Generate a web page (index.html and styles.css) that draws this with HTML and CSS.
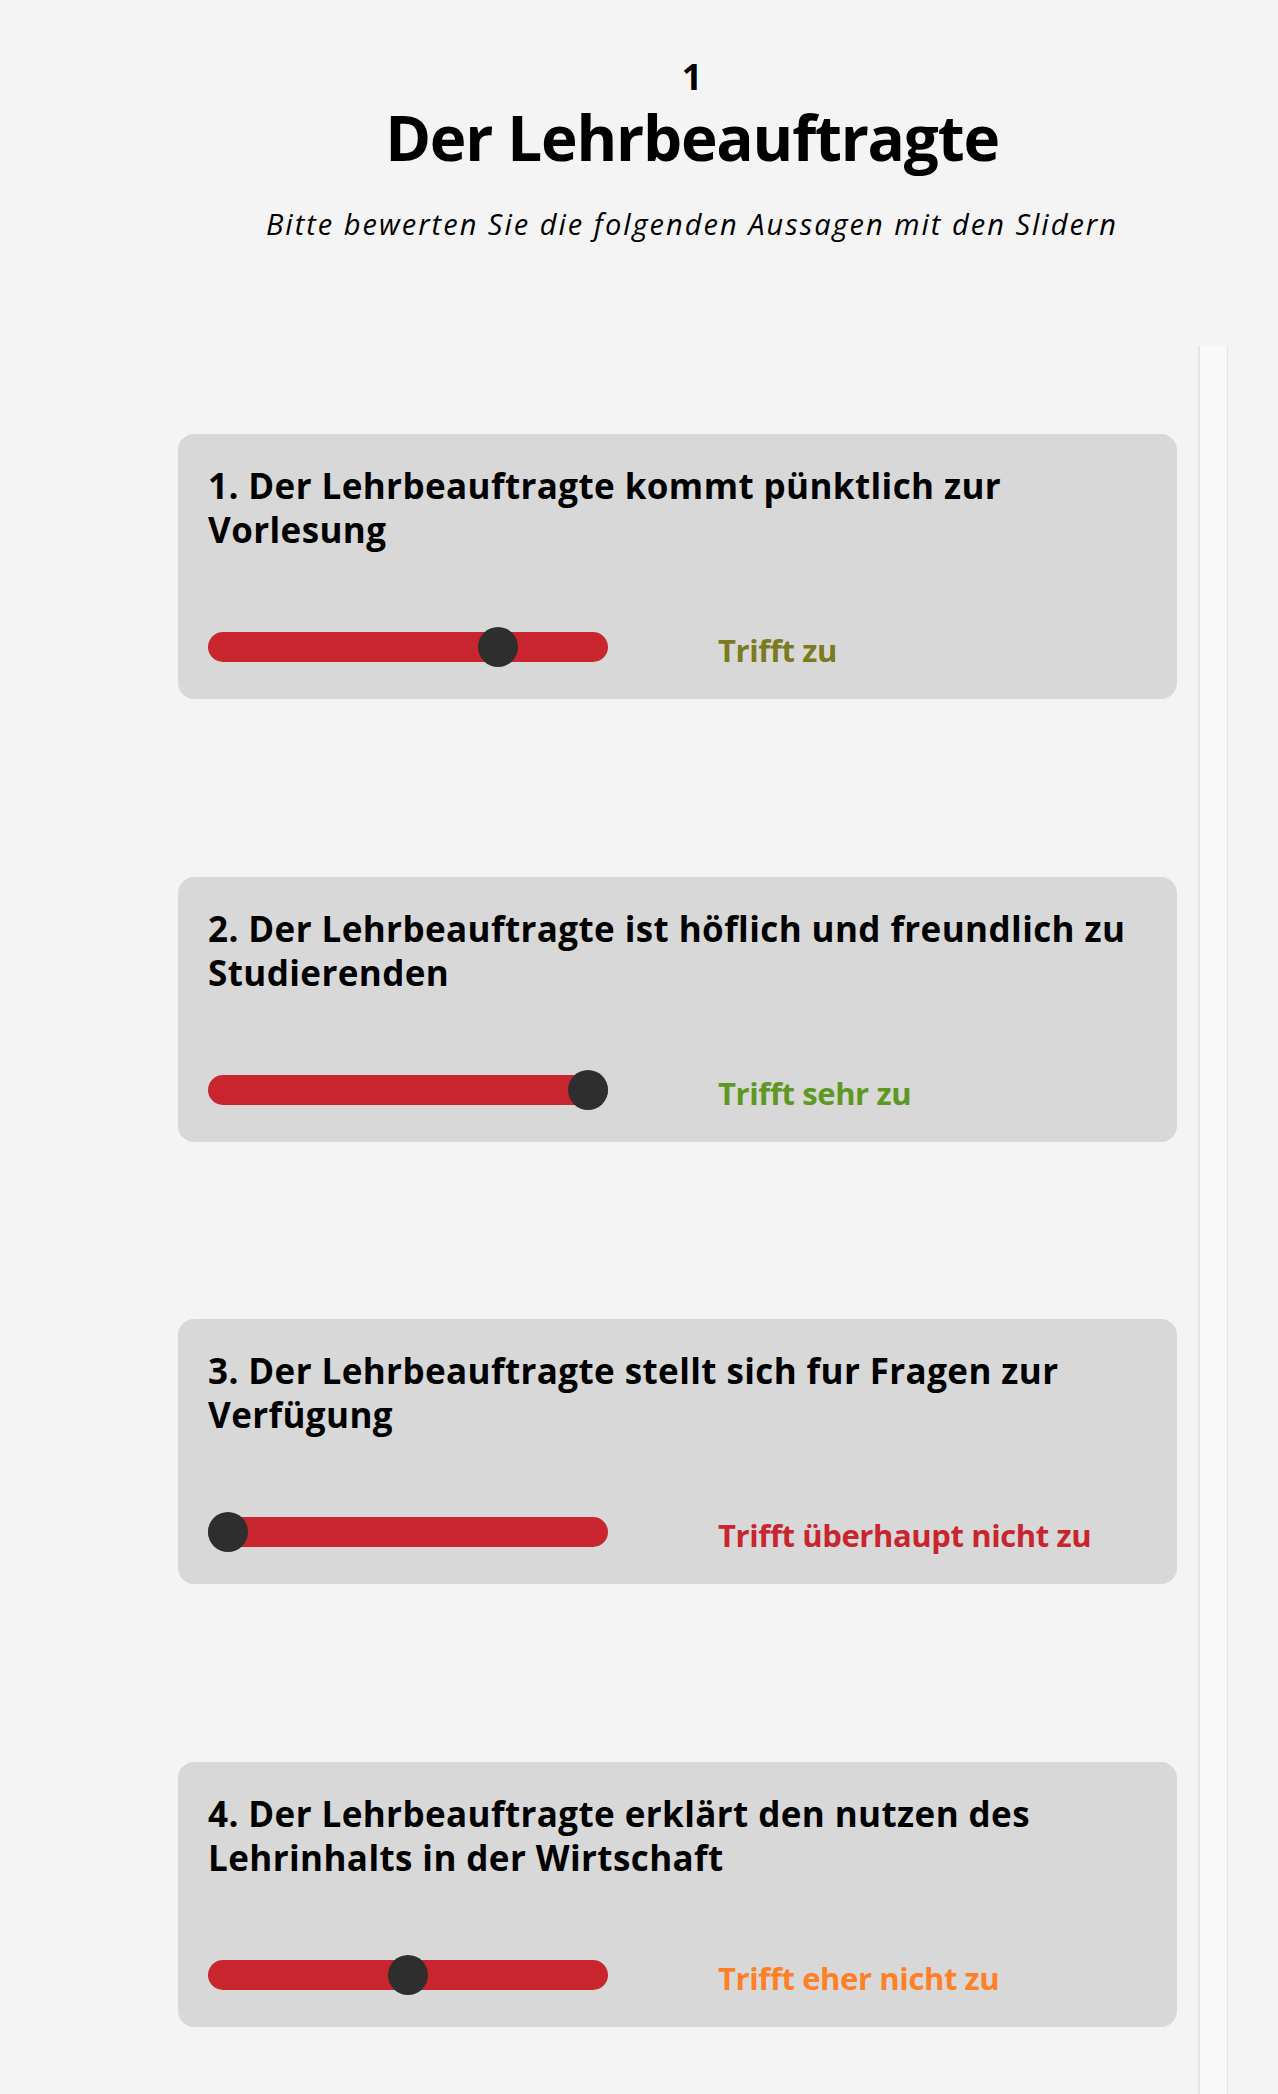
FILE: index.html
```html
<!DOCTYPE html>
<html lang="de">
<head>
<meta charset="utf-8">
<title>Der Lehrbeauftragte</title>
<link rel="stylesheet" href="styles.css">
</head>
<body>
<div class="page">
  <header class="header">
    <div class="step">1</div>
    <h1 class="title">Der Lehrbeauftragte</h1>
    <p class="subtitle">Bitte bewerten Sie die folgenden Aussagen mit den Slidern</p>
  </header>
  <div class="survey">
    <div class="questions">
      <section class="card">
        <h2 class="question">1. Der Lehrbeauftragte kommt pünktlich zur Vorlesung</h2>
        <div class="answer">
          <div class="slider"><span class="thumb" style="--v:3"></span></div>
          <span class="label label-agree">Trifft zu</span>
        </div>
      </section>
      <section class="card">
        <h2 class="question">2. Der Lehrbeauftragte ist höflich und freundlich zu Studierenden</h2>
        <div class="answer">
          <div class="slider"><span class="thumb" style="--v:4"></span></div>
          <span class="label label-strong">Trifft sehr zu</span>
        </div>
      </section>
      <section class="card">
        <h2 class="question">3. Der Lehrbeauftragte stellt sich fur Fragen zur Verfügung</h2>
        <div class="answer">
          <div class="slider"><span class="thumb" style="--v:0"></span></div>
          <span class="label label-none">Trifft überhaupt nicht zu</span>
        </div>
      </section>
      <section class="card">
        <h2 class="question">4. Der Lehrbeauftragte erklärt den nutzen des Lehrinhalts in der Wirtschaft</h2>
        <div class="answer">
          <div class="slider"><span class="thumb" style="--v:2"></span></div>
          <span class="label label-rather">Trifft eher nicht zu</span>
        </div>
      </section>
    </div>
    <div class="scrolltrack"></div>
  </div>
</div>
</body>
</html>
```
FILE: styles.css
```css
html, body {
  margin: 0;
  padding: 0;
  background: #f4f4f4;
  height: 2094px;
  overflow: hidden;
}
body {
  font-family: "Open Sans", "DejaVu Sans", sans-serif;
  color: #000;
}
.page {
  width: 1072px;
  margin-left: 156px;
}
.header {
  text-align: center;
  padding-top: 59px;
}
.step {
  font-size: 36px;
  font-weight: 700;
  line-height: 36px;
}
.title {
  margin: 8px 0 0;
  font-size: 62px;
  font-weight: 700;
  line-height: 1.1;
  letter-spacing: -1.2px;
}
.subtitle {
  margin: 36px 0 0;
  font-size: 29px;
  font-style: italic;
  line-height: 1.2;
  letter-spacing: 2px;
}
.survey {
  display: flex;
  margin-top: 104px;
  height: 1748px;
}
.questions {
  flex: 1;
  display: flex;
  flex-direction: column;
  gap: 177.67px;
  padding: 88px 21px 0 22px;
}
.scrolltrack {
  width: 27px;
  background: #f9f9f9;
  border-left: 2px solid #e4e4e4;
  border-right: 1px solid #e4e4e4;
}
.card {
  background: #d8d8d8;
  border-radius: 16px;
  padding: 30px 30px 32px;
  height: 265px;
  box-sizing: border-box;
}
.question {
  margin: 0;
  font-size: 35px;
  font-weight: 700;
  line-height: 44px;
  letter-spacing: 0.4px;
  height: 88px;
}
.answer {
  display: flex;
  align-items: center;
  margin-top: 75px;
  height: 40px;
}
.slider {
  position: relative;
  width: 400px;
  height: 30px;
  border-radius: 15px;
  background: #c9252f;
  flex: none;
}
.thumb {
  position: absolute;
  top: -5px;
  left: calc(var(--v) / 4 * (100% - 40px));
  width: 40px;
  height: 40px;
  border-radius: 50%;
  background: #2e2e2e;
}
.label {
  margin-left: 110px;
  padding-top: 6px;
  font-size: 31px;
  font-weight: 700;
  line-height: 44px;
  letter-spacing: -0.4px;
}
.label-agree { color: #7a7a1f; }
.label-strong { color: #5e9823; }
.label-none { color: #c9252f; }
.label-rather { color: #ff7f27; }
```
